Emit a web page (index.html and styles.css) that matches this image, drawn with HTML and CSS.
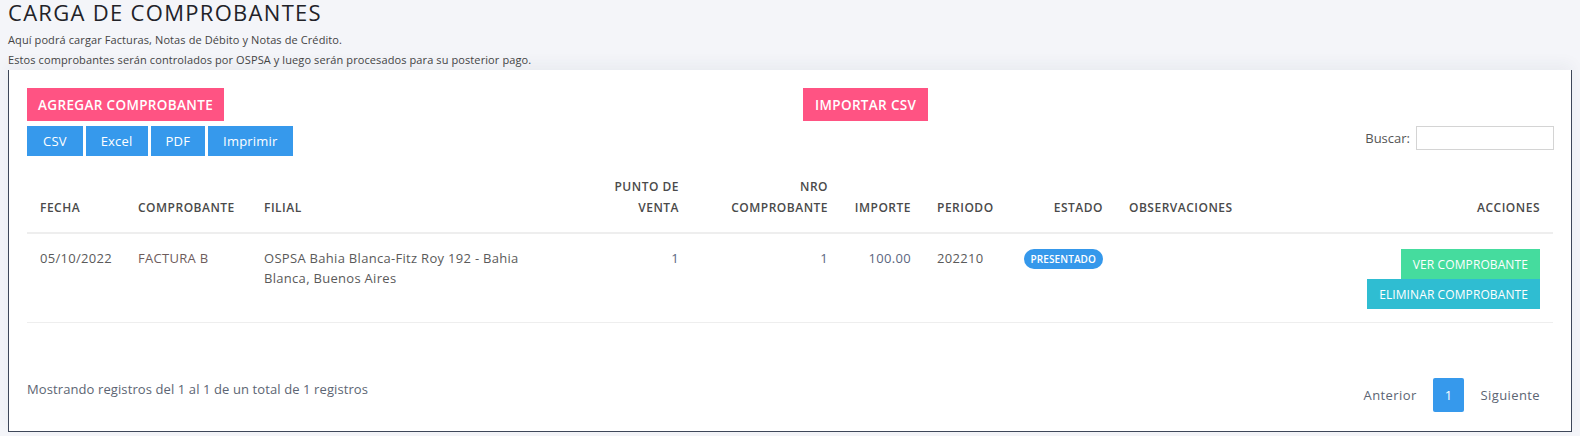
FILE: index.html
```html
<!DOCTYPE html>
<html lang="es">
<head>
<meta charset="utf-8">
<title>Carga de comprobantes</title>
<link rel="stylesheet" href="styles.css">
</head>
<body>
<div class="page">
  <h1 class="title">CARGA DE COMPROBANTES</h1>
  <p class="intro">Aquí podrá cargar Facturas, Notas de Débito y Notas de Crédito.</p>
  <p class="intro">Estos comprobantes serán controlados por OSPSA y luego serán procesados para su posterior pago.</p>

  <div class="card">
    <div class="top-row">
      <div class="half"><button class="btn btn-pink">AGREGAR COMPROBANTE</button></div>
      <div class="half half-right"><button class="btn btn-pink btn-import">IMPORTAR CSV</button></div>
    </div>
    <div class="tools-row">
      <div class="export">
        <button class="btn btn-blue">CSV</button>
        <button class="btn btn-blue">Excel</button>
        <button class="btn btn-blue">PDF</button>
        <button class="btn btn-blue">Imprimir</button>
      </div>
      <label class="search">Buscar: <input type="text" class="search-input"></label>
    </div>

    <table class="grid">
      <colgroup>
        <col class="c-fecha"><col class="c-comp"><col class="c-filial"><col class="c-punto"><col class="c-nro">
        <col class="c-imp"><col class="c-per"><col class="c-est"><col class="c-obs"><col class="c-acc">
      </colgroup>
      <thead>
        <tr>
          <th>FECHA</th>
          <th>COMPROBANTE</th>
          <th>FILIAL</th>
          <th class="r">PUNTO DE<br>VENTA</th>
          <th class="r">NRO<br>COMPROBANTE</th>
          <th class="r">IMPORTE</th>
          <th>PERIODO</th>
          <th class="r">ESTADO</th>
          <th>OBSERVACIONES</th>
          <th class="r">ACCIONES</th>
        </tr>
      </thead>
      <tbody>
        <tr>
          <td>05/10/2022</td>
          <td class="tipo">FACTURA B</td>
          <td><span class="filial">OSPSA Bahia Blanca-Fitz Roy 192 - Bahia Blanca, Buenos Aires</span></td>
          <td class="r num">1</td>
          <td class="r num">1</td>
          <td class="r num">100.00</td>
          <td>202210</td>
          <td class="r"><span class="badge">PRESENTADO</span></td>
          <td></td>
          <td class="r">
            <div class="actions">
              <button class="btn btn-green">VER COMPROBANTE</button>
              <button class="btn btn-teal">ELIMINAR COMPROBANTE</button>
            </div>
          </td>
        </tr>
      </tbody>
    </table>

    <div class="footer">
      <div class="info">Mostrando registros del 1 al 1 de un total de 1 registros</div>
      <div class="pager">
        <span class="pg">Anterior</span>
        <span class="pg pg-current">1</span>
        <span class="pg">Siguiente</span>
      </div>
    </div>
  </div>
</div>
</body>
</html>
```

FILE: styles.css
```css
html, body {
  margin: 0;
  padding: 0;
}
body {
  background: #f4f5f9;
  font-family: "Open Sans", "Noto Sans", sans-serif;
  color: #555;
}
.page {
  padding: 0 8px 6px;
}
.title {
  margin: 0;
  font-size: 22px;
  line-height: 24px;
  font-weight: 400;
  color: #222228;
  letter-spacing: 1.3px;
}
.intro {
  margin: 0;
  font-size: 11px;
  line-height: 20px;
  color: #444;
  letter-spacing: 0.1px;
}
.intro:first-of-type {
  margin-top: 6px;
}
.card {
  background: #fff;
  border: 1px solid #3e4759;
  border-top: 0;
  padding: 18px 18px 19px;
  box-shadow: 0 -6px 14px rgba(40, 50, 80, 0.05);
}
.top-row {
  display: flex;
}
.half {
  flex: 1 1 0;
}
.half-right {
  padding-left: 26px;
}
.btn {
  border: 0;
  margin: 0;
  font-family: inherit;
  color: #fff;
  cursor: pointer;
  border-radius: 0;
}
.btn-pink {
  background: #ff5383;
  height: 33px;
  padding: 0 11px;
  font-size: 13.5px;
  font-weight: 600;
  letter-spacing: 0.35px;
}
.btn-import {
  padding: 0 12px;
}
.tools-row {
  display: flex;
  justify-content: space-between;
  align-items: flex-start;
  margin-top: 5px;
}
.export {
  display: flex;
  gap: 3px;
}
.btn-blue {
  background: #3699ec;
  height: 30px;
  padding: 0 15px;
  font-size: 13px;
  letter-spacing: 0.2px;
}
.btn-blue:first-child {
  padding: 0 16px;
}
.search {
  display: flex;
  align-items: center;
  gap: 6px;
  font-size: 13px;
  color: #555;
  margin-right: -1px;
}
.search-input {
  width: 138px;
  height: 24px;
  box-sizing: border-box;
  border: 1px solid #d4d4d4;
  margin: 0;
}
.grid {
  width: 100%;
  border-collapse: collapse;
  table-layout: fixed;
  margin-top: 10px;
}
.c-fecha { width: 98px; }
.c-comp { width: 126px; }
.c-filial { width: 294px; }
.c-punto { width: 147px; }
.c-nro { width: 149px; }
.c-imp { width: 83px; }
.c-per { width: 76px; }
.c-est { width: 116px; }
.c-obs { width: 200px; }
.grid th {
  text-align: left;
  vertical-align: bottom;
  font-size: 12px;
  font-weight: 600;
  line-height: 21px;
  color: #4a4a4a;
  padding: 10px 13px 14px;
  border-bottom: 2px solid #eeeeee;
  letter-spacing: 0.5px;
}
.grid td {
  vertical-align: top;
  font-size: 13px;
  line-height: 20px;
  color: #5a5a5a;
  padding: 14px 13px 13px;
  border-bottom: 1px solid #eeeeee;
  letter-spacing: 0.3px;
}
.grid .r {
  text-align: right;
}
.grid td.tipo {
  color: #6e5c5c;
}
.grid td.num {
  color: #5b6680;
}
.filial {
  display: block;
  max-width: 280px;
}
.badge {
  display: inline-block;
  background: #3598eb;
  color: #fff;
  font-size: 10px;
  font-weight: 600;
  line-height: 20px;
  padding: 0 7px;
  border-radius: 10px;
  letter-spacing: 0.1px;
}
.actions {
  display: flex;
  flex-direction: column;
  align-items: flex-end;
}
.btn-green, .btn-teal {
  height: 30px;
  font-size: 12px;
  font-weight: 500;
  padding: 0 12px;
  letter-spacing: 0.1px;
}
.btn-green {
  background: #45dc9e;
  margin-top: 1px;
}
.btn-teal {
  background: #2fbdd2;
}
.footer {
  display: flex;
  justify-content: space-between;
  align-items: flex-start;
  margin-top: 55px;
}
.info {
  font-size: 13px;
  line-height: 22px;
  color: #5c6573;
  letter-spacing: 0.1px;
}
.pager {
  display: flex;
  align-items: center;
  margin-right: 13px;
}
.pg {
  font-size: 13px;
  color: #5c6573;
  padding: 0 16px;
  line-height: 34px;
  letter-spacing: 0.4px;
}
.pg:last-child {
  padding-right: 0;
}
.pg-current {
  background: #3699ec;
  color: #fff;
  border-radius: 2px;
  padding: 0 12px;
}
```
